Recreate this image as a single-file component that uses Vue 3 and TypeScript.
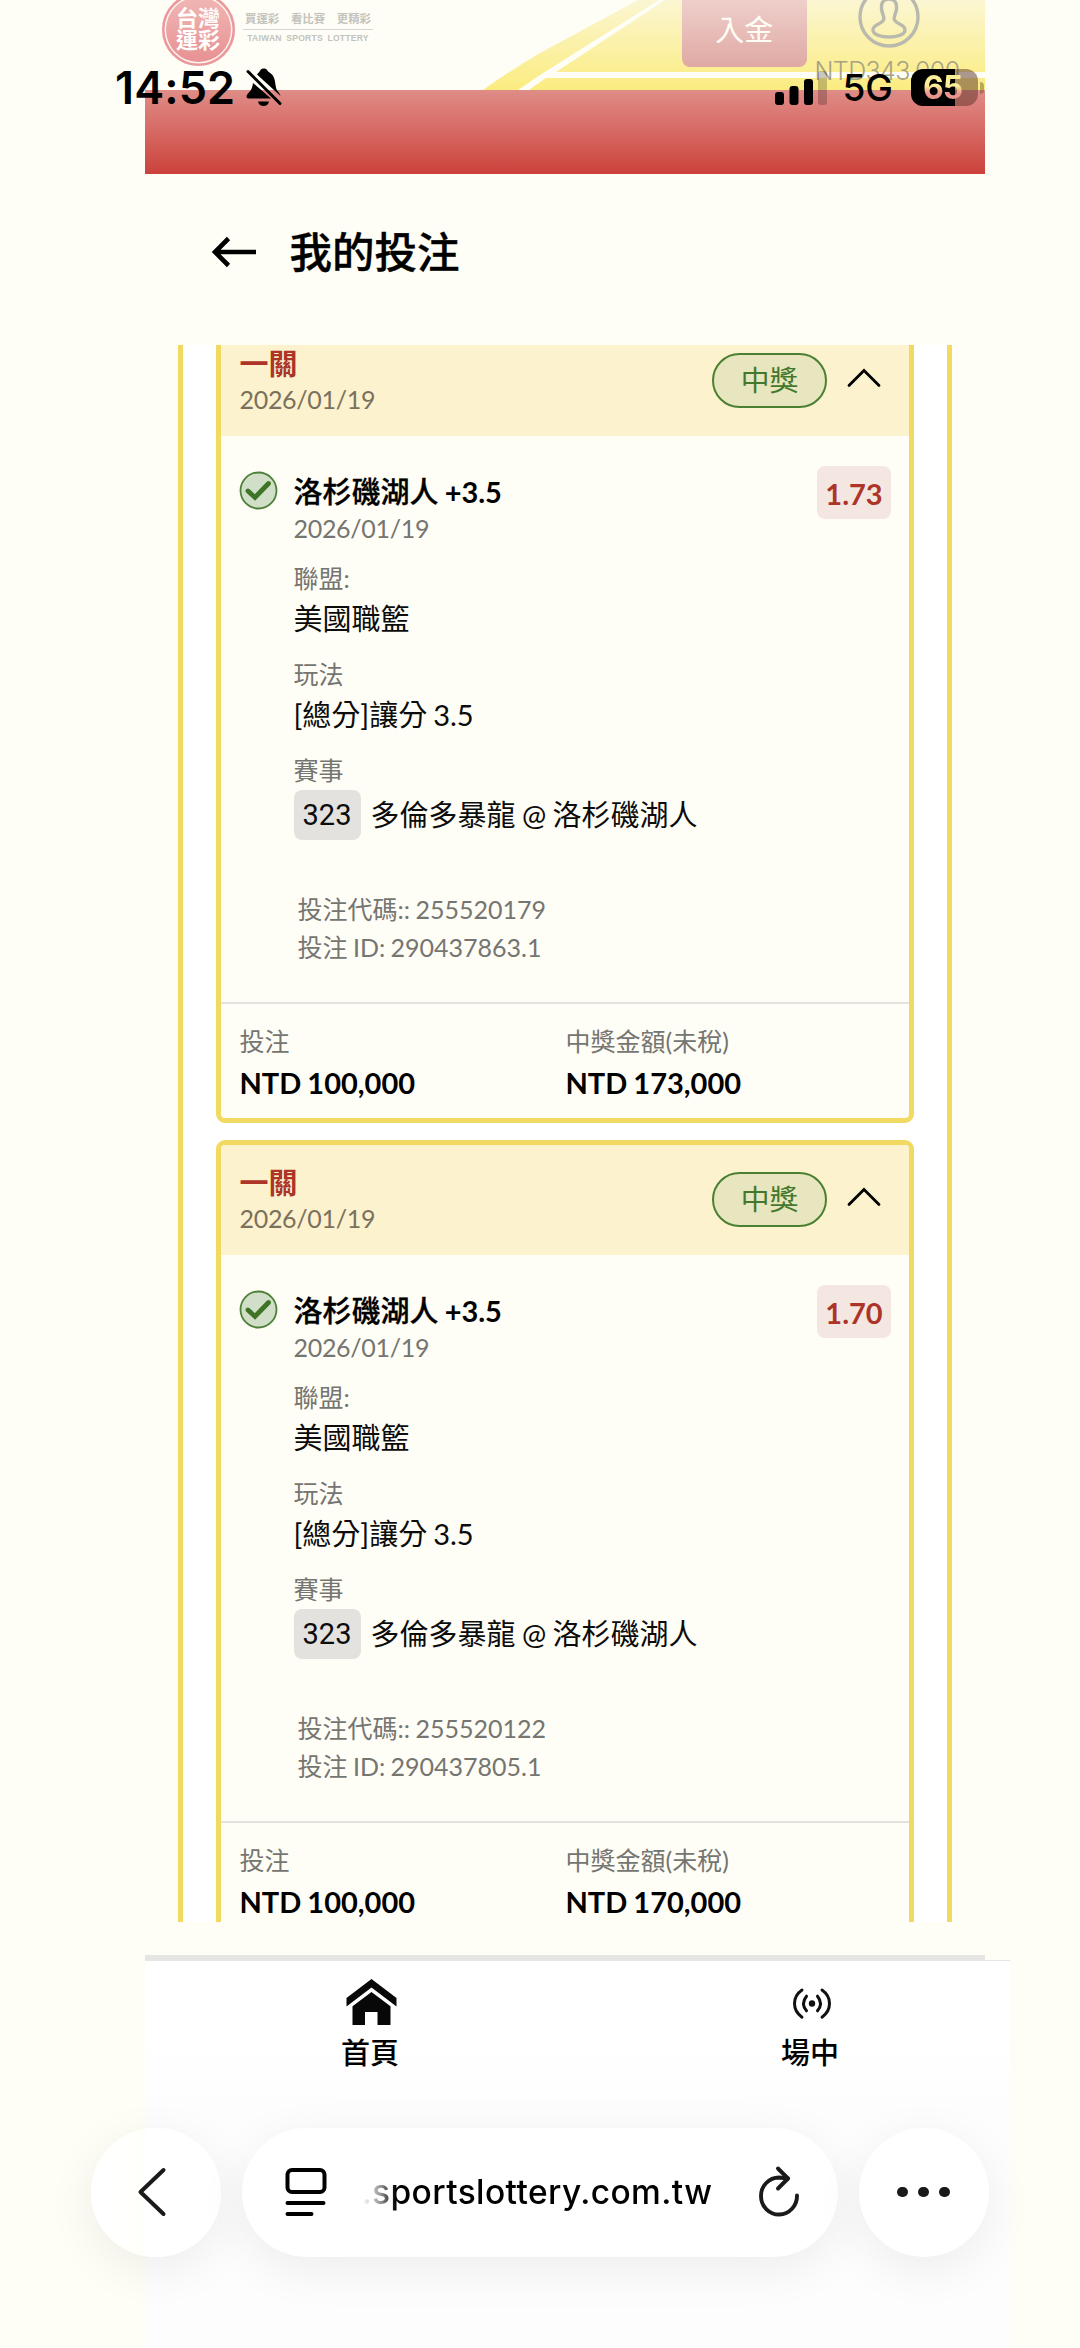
<script setup lang="ts">
interface Bet {
  title: string
  date: string
  status: string
  team: string
  handicap: string
  odds: string
  league: string
  play: string
  matchNo: string
  match: string
  code: string
  betId: string
  stake: string
  payout: string
}

const base = {
  title: '一關',
  date: '2026/01/19',
  status: '中獎',
  team: '洛杉磯湖人',
  handicap: '+3.5',
  league: '美國職籃',
  play: '[總分]讓分 3.5',
  matchNo: '323',
  match: '多倫多暴龍 @ 洛杉磯湖人',
  stake: 'NTD 100,000',
}

const bets: Bet[] = [
  { ...base, odds: '1.73', code: '255520179', betId: '290437863.1', payout: 'NTD 173,000' },
  { ...base, odds: '1.70', code: '255520122', betId: '290437805.1', payout: 'NTD 170,000' },
]
</script>

<template>
  <div class="screen">
    <header class="banner">
      <div class="brand">
        <svg class="art" width="840" height="90" viewBox="145 0 840 90" aria-hidden="true">
          <defs>
            <linearGradient id="gold" x1="0" y1="0" x2="0" y2="90" gradientUnits="userSpaceOnUse">
              <stop offset="0" stop-color="#fbf6d2" />
              <stop offset="1" stop-color="#fbec80" />
            </linearGradient>
          </defs>
          <g fill="url(#gold)">
            <path d="M638 0H659L540 75L518 90H483Q508 72 540 53Z" />
            <path d="M665 0H985V72H556Z" />
            <path d="M546 78H985V90H529Z" />
          </g>
        </svg>
        <div class="seal"><span>台灣</span><span>運彩</span></div>
        <div class="slogan">
          <div class="slogan-zh"><span>買運彩</span><span>看比賽</span><span>更精彩</span></div>
          <div class="slogan-en">TAIWAN SPORTS LOTTERY</div>
        </div>
        <div class="deposit">入金</div>
        <div class="account">
          <svg width="62" height="48" viewBox="0 0 62 48" fill="none" stroke="#b9b9ae" stroke-width="3.4">
            <circle cx="31" cy="17" r="29" />
            <path d="M31 -1C25 -1 23 3 23.500 9C24 14 27 17 25.500 20C23 25 15 24 15 30C15 35 24 37 31 37S47 35 47 30C47 24 39 25 36.500 20C35 17 38 14 38.500 9C39 3 37 -1 31 -1Z" />
          </svg>
          <div class="balance">NTD343,000</div>
        </div>
      </div>
      <div class="ribbon"></div>
    </header>

    <div class="status">
      <span class="clock">14:52</span>
      <svg class="bell" width="36" height="39" viewBox="0 0 36 39">
        <path fill="#000" d="M7 15L25 30.500H3C0.500 30.500 0 28.500 1 27C3 23.500 6 23 7 15Z" />
        <path fill="#000" d="M11 6.500C12.500 4.500 13.500 4 14.500 2C15.500 0 20 0 21 2C22 4 24 4.500 26 6.500C29 10 29 14 30 19.500C30.500 23 33.500 24 34.500 28Z" />
        <path fill="#000" d="M12 33.500H23C22 39.500 13 39.500 12 33.500Z" />
        <path d="M2 3.500L34 35.500" stroke="#000" stroke-width="3" stroke-linecap="round" />
      </svg>
      <svg class="bars" width="53" height="36" viewBox="0 0 53 36">
        <rect x="0" y="22" width="9" height="13" rx="3" />
        <rect x="14.500" y="16" width="9" height="19" rx="3" />
        <rect x="29" y="9" width="9" height="26" rx="3" />
        <rect x="43" y="1" width="9" height="34" rx="3" opacity=".22" />
      </svg>
      <span class="net">5G</span>
      <div class="battery"><span>65</span></div>
      <i class="nub"></i>
    </div>

    <div class="page-title">
      <svg width="46" height="32" viewBox="0 0 46 32" fill="none" stroke="#000" stroke-width="4.600">
        <path d="M45 16H4M17.500 2.500L4 16L17.500 29.500" />
      </svg>
      <h1>我的投注</h1>
    </div>

    <main class="viewport">
      <div class="list">
        <article v-for="bet in bets" :key="bet.betId" class="card">
          <div class="card-head">
            <div class="head-text">
              <div class="kind">{{ bet.title }}</div>
              <div class="date head-date">{{ bet.date }}</div>
            </div>
            <div class="pill">{{ bet.status }}</div>
            <svg class="chev" width="34" height="20" viewBox="0 0 34 20" fill="none" stroke="#000" stroke-width="2.800" stroke-linecap="round">
              <path d="M2 17.500L17 2.500L32 17.500" />
            </svg>
          </div>
          <div class="leg">
            <svg class="check" width="39" height="39" viewBox="0 0 39 39">
              <circle cx="19.500" cy="19.500" r="18" fill="#d2dfc8" stroke="#4d8039" stroke-width="1.800" />
              <path d="M9 20L16 26.500L29.500 12.500" fill="none" stroke="#3f7427" stroke-width="4.800" stroke-linecap="round" />
            </svg>
            <div class="detail">
              <div class="team">{{ bet.team }} <b>{{ bet.handicap }}</b></div>
              <div class="date">{{ bet.date }}</div>
              <div class="label first">聯盟:</div>
              <div class="value">{{ bet.league }}</div>
              <div class="label">玩法</div>
              <div class="value">{{ bet.play }}</div>
              <div class="label">賽事</div>
              <div class="match"><span class="no">{{ bet.matchNo }}</span><span class="versus">{{ bet.match }}</span></div>
              <div class="codes">
                <div>投注代碼:: {{ bet.code }}</div>
                <div>投注 ID: {{ bet.betId }}</div>
              </div>
            </div>
            <div class="odds">{{ bet.odds }}</div>
          </div>
          <div class="sums">
            <div>
              <div class="sum-label">投注</div>
              <div class="sum">{{ bet.stake }}</div>
            </div>
            <div>
              <div class="sum-label">中獎金額(未稅)</div>
              <div class="sum">{{ bet.payout }}</div>
            </div>
          </div>
        </article>
      </div>
    </main>

    <div class="edge"></div>
    <nav class="tabs">
      <div class="tab">
        <svg width="51" height="47" viewBox="0 0 51 47" fill="#080808">
          <path d="M25.500 0L50.500 19V27.500L25.500 8.500L0.500 27.500V19Z" />
          <path d="M25.500 13L44.500 27.300V46H31.500V33H19V46H6.500V27.300Z" />
        </svg>
        <span>首頁</span>
      </div>
      <div class="tab">
        <svg class="live" width="40" height="47" viewBox="0 0 40 47" fill="none" stroke="#111" stroke-width="3" stroke-linecap="round">
          <circle cx="20" cy="24.500" r="3.200" fill="#111" stroke="none" />
          <path d="M14.500 17.200Q8.500 24.500 14.500 31.800M25.500 17.200Q31.500 24.500 25.500 31.800M10 11C0 18 0 31 10 38.200M30 11C40 18 40 31 30 38.200" />
        </svg>
        <span>場中</span>
      </div>
    </nav>

    <div class="browser">
      <div class="round back">
        <svg width="30" height="50" viewBox="0 0 30 50" fill="none" stroke="#1a1a1a" stroke-width="4" stroke-linecap="round" stroke-linejoin="round">
          <path d="M26.500 3L3.500 25L26.500 47" />
        </svg>
      </div>
      <div class="address">
        <svg width="42" height="50" viewBox="0 0 42 50" fill="none" stroke="#000" stroke-width="4" stroke-linecap="round">
          <rect x="2.500" y="3" width="37" height="22" rx="4.500" />
          <path d="M2.500 36H38.500M2.500 47H26.500" />
        </svg>
        <div class="url">.sportslottery.com.tw</div>
        <svg class="reload" width="42" height="52" viewBox="0 0 42 52" fill="none" stroke="#1a1a1a" stroke-width="3.900" stroke-linecap="round" stroke-linejoin="round">
          <path d="M39 30.500A18 18.500 0 1 1 21 12.500L30 13.500" />
          <path d="M20 3.500L30 13.500L20 23.500" />
        </svg>
      </div>
      <div class="round more"><i></i><i></i><i></i></div>
    </div>
  </div>
</template>

<style>
body {
  margin: 0;
  background: #fffef6;
}
</style>

<style scoped>
* {
  box-sizing: border-box;
}
.screen {
  position: relative;
  width: 1080px;
  height: 2348px;
  overflow: hidden;
  background: #fffef6;
  color: #000;
  font-family: Lato, 'Noto Sans CJK TC', sans-serif;
  white-space: nowrap;
}

/* site banner under the status bar */
.banner {
  width: 840px;
  height: 174px;
  margin-left: 145px;
}
.brand {
  position: relative;
  display: flex;
  height: 90px;
  overflow: hidden;
}
.art {
  position: absolute;
  left: 0;
  top: 0;
}
.seal {
  position: relative;
  width: 73px;
  height: 73px;
  margin: -7.500px 0 0 16.500px;
  padding-top: 14px;
  border-radius: 50%;
  background: linear-gradient(#f0b9b6, #e78f92);
  box-shadow: inset 0 0 0 2.500px #e9999b, inset 0 0 0 4px #fdf3ee;
  color: #fff;
  font-size: 22px;
  font-weight: 700;
  line-height: 22px;
  text-align: center;
}
.seal span {
  display: block;
}
.slogan {
  position: relative;
  width: 130px;
  margin-left: 8.500px;
  color: #c3c3bd;
}
.slogan-zh {
  display: flex;
  justify-content: space-between;
  height: 30px;
  padding: 11px 2px 0;
  border-bottom: 1.500px solid #d6d6d0;
  font-size: 11.400px;
  font-weight: 700;
  line-height: 15px;
}
.slogan-en {
  margin-top: 3px;
  font: 700 8.600px/11px 'Liberation Sans', sans-serif;
  letter-spacing: .2px;
  word-spacing: 2px;
  text-align: center;
}
.deposit {
  position: relative;
  width: 125.500px;
  height: 67px;
  margin-left: 308.500px;
  border-radius: 0 0 8px 8px;
  background: linear-gradient(#efcfcb, #dfa9a3);
  color: #fffdf6;
  font-size: 29px;
  line-height: 60px;
  text-align: center;
}
.account {
  position: relative;
  width: 163px;
  text-align: center;
}
.account svg {
  display: block;
  margin-left: 50.500px;
}
.balance {
  margin: 8px 0 0 -3px;
  color: #a7a283;
  font-family: Inter, sans-serif;
  font-size: 25px;
  font-weight: 300;
  line-height: 30px;
  letter-spacing: -.6px;
}
.ribbon {
  height: 84px;
  background: linear-gradient(#df8c87, #d9716c 38%, #cb423b);
}

/* phone status bar floats over the banner */
.status {
  position: absolute;
  left: 115px;
  top: 62px;
  display: flex;
  align-items: center;
  width: 872px;
  height: 51px;
}
.clock {
  width: 131px;
  font: 600 45px/51px Inter, sans-serif;
  letter-spacing: .1px;
}
.bars {
  margin-left: 492.500px;
}
.net {
  width: 69px;
  margin-left: 15px;
  font: 500 37px/53px Inter, sans-serif;
}
.battery {
  width: 67px;
  height: 37px;
  margin-left: -1px;
  padding-right: 3px;
  border-radius: 12px;
  background: linear-gradient(90deg, #000 65%, rgba(90, 50, 40, .5) 65%);
  text-align: center;
}
.battery span {
  background: linear-gradient(#fbee97 45%, #e9978c 65%);
  background-clip: text;
  color: transparent;
  font: 700 32px/37px Inter, sans-serif;
  letter-spacing: -1px;
}
.nub {
  width: 4px;
  height: 12px;
  margin-left: 2px;
  border-radius: 0 4px 4px 0;
  background: rgba(90, 70, 20, .4);
}

.page-title {
  display: flex;
  align-items: center;
  gap: 32.500px;
  height: 171px;
  padding: 0 0 15px 211px;
}
h1 {
  margin: 0;
  font-size: 42.500px;
  font-weight: 500;
  line-height: 60px;
  -webkit-text-stroke: .4px #000;
}

/* scrolled bet list */
.viewport {
  width: 774px;
  height: 1577px;
  margin-left: 178px;
  overflow: hidden;
  border: solid #f2d961;
  border-width: 0 5px;
  background: #fff;
}
.list {
  display: flex;
  flex-direction: column;
  gap: 17.300px;
  margin: -24.500px 33px 0;
}
.card {
  flex: none;
  height: 802.100px;
  overflow: hidden;
  border: 5px solid #f2d961;
  border-radius: 9px;
  background: #fffef6;
}
.card-head {
  display: flex;
  align-items: center;
  height: 110px;
  padding: 0 28px 0 18.500px;
  background: #fdf2ce;
}
.head-text {
  flex: 1;
  padding-top: 3px;
}
.kind {
  color: #ac3528;
  font-size: 29px;
  font-weight: 700;
  line-height: 35px;
}
.date {
  color: #757571;
  font-size: 25px;
  line-height: 37px;
  letter-spacing: -.3px;
}
.head-date {
  color: #7a715d;
  line-height: 37px;
}
.pill {
  width: 115px;
  height: 55px;
  border: 2px solid #4b8033;
  border-radius: 28px;
  background: #e7e6bf;
  color: #44782c;
  font-size: 28.800px;
  line-height: 51px;
  text-align: center;
}
.chev {
  margin: 0 0 6px 20px;
}
.leg {
  display: flex;
  height: 566px;
  padding: 30.500px 18px 0 17.500px;
}
.check {
  margin: 4.500px 16px 0 0;
}
.detail {
  flex: 1;
  padding-top: 6.500px;
}
.team {
  font-size: 29px;
  font-weight: 500;
  line-height: 37px;
  word-spacing: -1px;
  -webkit-text-stroke: .3px #000;
}
.team b {
  font-weight: 700;
  letter-spacing: -.1px;
  -webkit-text-stroke: 0;
}
.label {
  margin-top: 16px;
  color: #757571;
  font-size: 25px;
  line-height: 37px;
  padding-bottom: 1px;
}
.label.first {
  margin-top: 13px;
}
.value {
  color: #0c0c0c;
  font-size: 29px;
  line-height: 42px;
  word-spacing: -1.500px;
}
.match {
  display: flex;
  gap: 10px;
  color: #0c0c0c;
  font-size: 29px;
  line-height: 50px;
}
.versus {
  word-spacing: -1px;
}
.no {
  width: 67px;
  border-radius: 8px;
  background: #e3e2de;
  font-family: Roboto, sans-serif;
  text-align: center;
}
.codes {
  margin: 50px 0 0 4px;
  color: #757571;
  font-size: 25px;
  line-height: 38px;
  word-spacing: -1px;
}
.odds {
  width: 74px;
  height: 53px;
  border-radius: 8px;
  background: #f4e7e2;
  color: #ac3528;
  font-size: 29px;
  font-weight: 700;
  line-height: 55px;
  text-align: center;
}
.sums {
  display: grid;
  grid-template-columns: 326px 1fr;
  padding: 18px 0 0 18.500px;
  border-top: 2px solid #e3e3de;
}
.sum-label {
  color: #757571;
  font-size: 25px;
  line-height: 38px;
}
.sum {
  font-size: 29px;
  font-weight: 700;
  line-height: 46px;
  word-spacing: -1px;
}

/* site tab bar */
.edge {
  width: 840px;
  height: 5px;
  margin: 33px 0 0 145px;
  background: #e5e5e3;
}
.tabs {
  display: flex;
  width: 865px;
  height: 388px;
  margin-left: 145px;
  padding: 18px 0 0 6px;
  border-top: 1.300px solid #e5e5e3;
  background: linear-gradient(#fff 20%, #fdfdfd 40%, #fdfdfd);
}
.tab {
  display: flex;
  flex: 0 0 440px;
  flex-direction: column;
  align-items: center;
  font-size: 29px;
  font-weight: 500;
}
.tab span {
  margin: 6px 2px 0 0;
  line-height: 42px;
}
.live {
  margin-left: 2px;
}

/* floating browser controls */
.browser {
  position: absolute;
  left: 90.500px;
  top: 2127.500px;
  display: flex;
  gap: 21px;
}
.round,
.address {
  display: flex;
  align-items: center;
  height: 129px;
  border-radius: 65px;
  background: #fff;
  box-shadow: 0 12px 50px rgba(0, 0, 0, .065);
}
.round {
  justify-content: center;
  width: 130px;
}
.back {
  background: linear-gradient(90deg, #fff 14%, #fffff9 42%, #fff 42%);
}
.back svg {
  margin-right: 8px;
}
.address {
  width: 596px;
  padding-left: 43px;
}
.url {
  flex: 1;
  margin-left: 35px;
  background: linear-gradient(90deg, #fff, #999 18px, #000 34px);
  background-clip: text;
  color: transparent;
  font: 500 33.500px/46px Inter, sans-serif;
  letter-spacing: .4px;
}
.reload {
  margin: 0 38px 3px 0;
}
.more {
  gap: 10px;
}
.more i {
  width: 10.800px;
  height: 10.800px;
  border-radius: 50%;
  background: #1a1a1a;
}
</style>
